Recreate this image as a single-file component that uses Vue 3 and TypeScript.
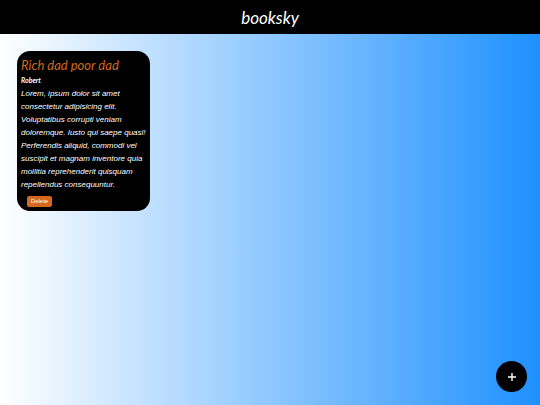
<script setup lang="ts">
import { ref } from 'vue'

interface Book {
  id: number
  title: string
  author: string
  description: string
}

const books = ref<Book[]>([
  {
    id: 1,
    title: 'Rich dad poor dad',
    author: 'Robert',
    description:
      'Lorem, ipsum dolor sit amet consectetur adipisicing elit. Voluptatibus corrupti veniam doloremque. Iusto qui saepe quasi! Perferendis aliquid, commodi vel suscipit et magnam inventore quia mollitia reprehenderit quisquam repellendus consequuntur.',
  },
])

function removeBook(id: number) {
  books.value = books.value.filter((book) => book.id !== id)
}
</script>

<template>
  <div class="page">
    <header class="navbar">
      <h1>booksky</h1>
    </header>
    <main class="books">
      <article v-for="book in books" :key="book.id" class="card">
        <h2>{{ book.title }}</h2>
        <h3>{{ book.author }}</h3>
        <p>{{ book.description }}</p>
        <button type="button" class="delete" @click="removeBook(book.id)">Delete</button>
      </article>
    </main>
    <button type="button" class="add" aria-label="Add book">
      <svg viewBox="0 0 8 8" aria-hidden="true">
        <path d="M4 0V8M0 4H8" />
      </svg>
    </button>
  </div>
</template>

<style>
body {
  margin: 0;
}
</style>

<style scoped>
.page {
  min-height: 100vh;
  background: linear-gradient(to right, white, dodgerblue);
  color: white;
  font-family: Lato, "Liberation Sans", sans-serif;
  font-style: italic;
}

.navbar {
  padding: 5px 16px 3px;
  background: black;
  text-align: center;
}

h1,
h2,
h3,
p {
  margin: 0;
  font-weight: 400;
}

h1 {
  font-size: 17px;
  line-height: 26px;
}

.books {
  display: grid;
  grid-template-columns: repeat(auto-fill, 133px);
  gap: 17px;
  padding: 17px;
}

.card {
  box-sizing: border-box;
  padding: 5px 4px 4px;
  border-radius: 13px;
  background: black;
}

h2 {
  color: chocolate;
  font-size: 13px;
  line-height: 18px;
}

h3 {
  font-size: 7px;
  font-weight: 700;
  line-height: 13px;
}

p {
  font-family: "Liberation Sans", Arial, sans-serif;
  font-size: 8px;
  line-height: 13px;
}

button {
  border: 0;
  padding: 0;
  cursor: pointer;
}

.delete {
  display: block;
  width: 25px;
  height: 11px;
  margin: 5px 0 0 6px;
  border-radius: 2px;
  background: chocolate;
  color: white;
  font: 6px/11px "Liberation Sans", Arial, sans-serif;
}

.add {
  position: fixed;
  right: 13px;
  bottom: 13px;
  display: flex;
  align-items: center;
  justify-content: center;
  width: 31px;
  height: 31px;
  border-radius: 50%;
  background: black;
}

.add svg {
  width: 8px;
  height: 8px;
  fill: none;
  stroke: white;
  stroke-width: 1.4;
}
</style>
